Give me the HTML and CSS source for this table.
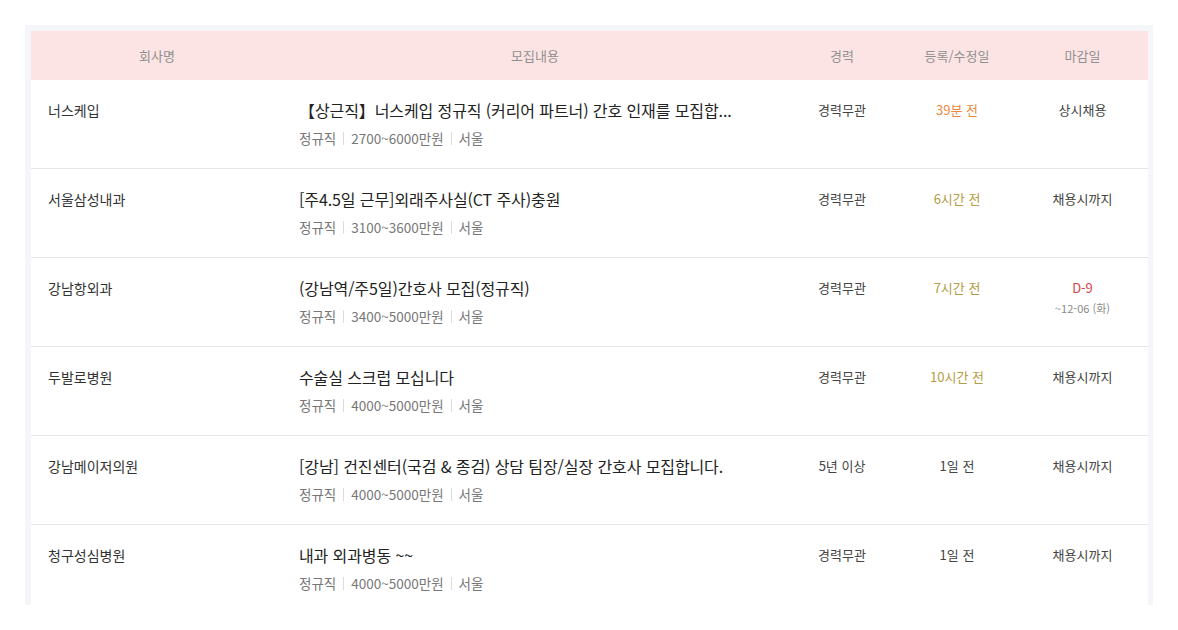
FILE: index.html
```html
<!DOCTYPE html>
<html lang="ko">
<head>
<meta charset="utf-8">
<title>채용공고</title>
<link rel="stylesheet" href="styles.css">
</head>
<body>
<div class="frame">
  <div class="board">
    <div class="row head">
      <div class="c">회사명</div>
      <div class="c">모집내용</div>
      <div class="c">경력</div>
      <div class="c">등록/수정일</div>
      <div class="c">마감일</div>
    </div>

    <div class="row">
      <div class="company">너스케입</div>
      <div class="content">
        <div class="title">【상근직】너스케입 정규직 (커리어 파트너) 간호 인재를 모집합...</div>
        <div class="meta">정규직<span class="sep"></span>2700~6000만원<span class="sep"></span>서울</div>
      </div>
      <div class="c">경력무관</div>
      <div class="c t-orange">39분 전</div>
      <div class="c">상시채용</div>
    </div>

    <div class="row">
      <div class="company">서울삼성내과</div>
      <div class="content">
        <div class="title">[주4.5일 근무]외래주사실(CT 주사)충원</div>
        <div class="meta">정규직<span class="sep"></span>3100~3600만원<span class="sep"></span>서울</div>
      </div>
      <div class="c">경력무관</div>
      <div class="c t-olive">6시간 전</div>
      <div class="c">채용시까지</div>
    </div>

    <div class="row">
      <div class="company">강남항외과</div>
      <div class="content">
        <div class="title">(강남역/주5일)간호사 모집(정규직)</div>
        <div class="meta">정규직<span class="sep"></span>3400~5000만원<span class="sep"></span>서울</div>
      </div>
      <div class="c">경력무관</div>
      <div class="c t-olive">7시간 전</div>
      <div class="c">
        <div class="dday">D-9</div>
        <div class="until">~12-06 (화)</div>
      </div>
    </div>

    <div class="row">
      <div class="company">두발로병원</div>
      <div class="content">
        <div class="title">수술실 스크럽 모십니다</div>
        <div class="meta">정규직<span class="sep"></span>4000~5000만원<span class="sep"></span>서울</div>
      </div>
      <div class="c">경력무관</div>
      <div class="c t-olive">10시간 전</div>
      <div class="c">채용시까지</div>
    </div>

    <div class="row">
      <div class="company">강남메이저의원</div>
      <div class="content">
        <div class="title">[강남] 건진센터(국검 &amp; 종검) 상담 팀장/실장 간호사 모집합니다.</div>
        <div class="meta">정규직<span class="sep"></span>4000~5000만원<span class="sep"></span>서울</div>
      </div>
      <div class="c">5년 이상</div>
      <div class="c">1일 전</div>
      <div class="c">채용시까지</div>
    </div>

    <div class="row">
      <div class="company">청구성심병원</div>
      <div class="content">
        <div class="title">내과 외과병동 ~~</div>
        <div class="meta">정규직<span class="sep"></span>4000~5000만원<span class="sep"></span>서울</div>
      </div>
      <div class="c">경력무관</div>
      <div class="c">1일 전</div>
      <div class="c">채용시까지</div>
    </div>
  </div>
</div>
</body>
</html>
```

FILE: styles.css
```css
* { box-sizing: border-box; }
html, body {
  margin: 0;
  padding: 0;
  background: #ffffff;
}
body {
  font-family: "Noto Sans CJK KR", "Noto Sans", sans-serif;
  color: #333;
  padding: 25px 0 0 25px;
  height: 630px;
  overflow: hidden;
}
.frame {
  width: 1128px;
  height: 580px;
  background: #f5f6f9;
  padding: 6px 5px 0 6px;
  overflow: hidden;
}
.board {
  background: #fff;
}
.row {
  display: grid;
  grid-template-columns: 252px 504px 110px 120px 131px;
  height: 89px;
  border-bottom: 1px solid #e6e6e6;
  align-items: start;
}
.row.head {
  height: 49px;
  background: #fce4e5;
  border-bottom: none;
  align-items: center;
}
.row.head .c {
  padding: 0;
  font-size: 13px;
  color: #909090;
  line-height: 20px;
}
.c {
  text-align: center;
  font-size: 13px;
  line-height: 20px;
  color: #444;
  padding-top: 20px;
}
.company {
  padding: 20px 0 0 17px;
  font-size: 14px;
  line-height: 20px;
  color: #333;
}
.content {
  padding: 20px 0 0 16px;
}
.title {
  font-size: 16px;
  line-height: 20px;
  color: #222;
  letter-spacing: -0.1px;
  white-space: nowrap;
}
.meta {
  margin-top: 8px;
  font-size: 13.5px;
  line-height: 20px;
  color: #777;
  display: flex;
  align-items: center;
}
.sep {
  display: inline-block;
  width: 1px;
  height: 13px;
  background: #dcdcdc;
  margin: 0 7px;
}
.t-orange { color: #ec8a3e; }
.t-olive { color: #b39d45; }
.dday {
  color: #d8404c;
  font-size: 13px;
  line-height: 20px;
}
.until {
  color: #8a8a8a;
  font-size: 11px;
  line-height: 16px;
  margin-top: 2px;
}
```
